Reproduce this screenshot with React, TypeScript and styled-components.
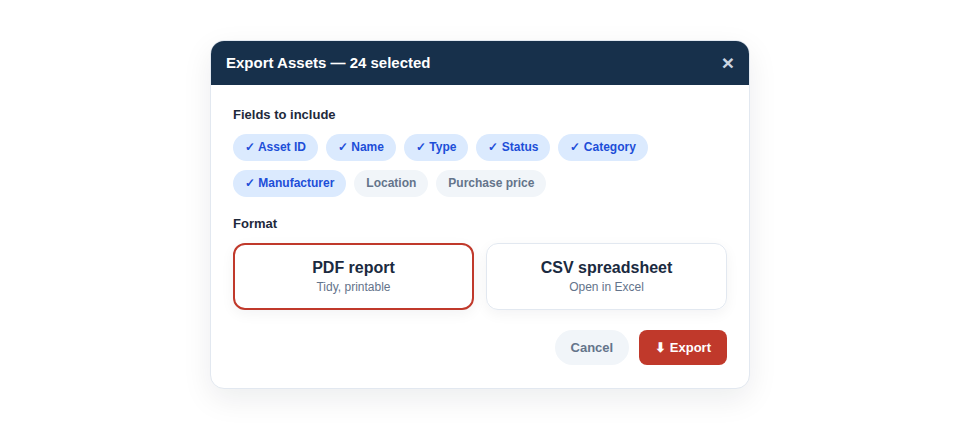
import React, { useState } from "react";
import styled, { createGlobalStyle } from "styled-components";

const GlobalStyle = createGlobalStyle`
    html, body {
        margin: 0;
        padding: 0;
        background: #ffffff;
        font-family: "Liberation Sans", Arial, sans-serif;
    }
    * {
        box-sizing: border-box;
    }
`

const fields = [
    {label: "Asset ID", on: true},
    {label: "Name", on: true},
    {label: "Type", on: true},
    {label: "Status", on: true},
    {label: "Category", on: true},
    {label: "Manufacturer", on: true},
    {label: "Location", on: false},
    {label: "Purchase price", on: false},
]

const formats = [
    {id: "pdf", title: "PDF report", text: "Tidy, printable"},
    {id: "csv", title: "CSV spreadsheet", text: "Open in Excel"},
]

export default function App() {
    const [format, setFormat] = useState("pdf")

    return (
        <Page>
            <GlobalStyle/>
            <Modal>
                <Header>
                    <Title>Export Assets — 24 selected</Title>
                    <CloseBtn aria-label="Close">×</CloseBtn>
                </Header>
                <Body>
                    <Section>
                        <Label>Fields to include</Label>
                        <Chips>
                            {fields.map((f) => (
                                <Chip key={f.label} $on={f.on}>
                                    {f.on ? "✓ " : ""}{f.label}
                                </Chip>
                            ))}
                        </Chips>
                    </Section>
                    <Section>
                        <Label>Format</Label>
                        <Cards>
                            {formats.map((f) => (
                                <Card key={f.id} $active={format === f.id} onClick={() => setFormat(f.id)}>
                                    <CardTitle>{f.title}</CardTitle>
                                    <CardText>{f.text}</CardText>
                                </Card>
                            ))}
                        </Cards>
                    </Section>
                    <Footer>
                        <CancelBtn>Cancel</CancelBtn>
                        <ExportBtn>⬇ Export</ExportBtn>
                    </Footer>
                </Body>
            </Modal>
        </Page>
    )
}

const Page = styled.div`
    width: 960px;
    height: 428px;
    display: flex;
    align-items: center;
    justify-content: center;
`

const Modal = styled.div`
    width: 540px;
    background: #ffffff;
    border: 1px solid #e2e8f0;
    border-radius: 14px;
    box-shadow: 0 10px 30px rgba(15, 23, 42, 0.08);
    overflow: hidden;
`

const Header = styled.div`
    display: flex;
    align-items: center;
    justify-content: space-between;
    height: 44px;
    padding: 0 15px;
    background: #17304b;
`

const Title = styled.h2`
    margin: 0;
    font-size: 15px;
    font-weight: 700;
    color: #ffffff;
`

const CloseBtn = styled.button`
    border: none;
    background: none;
    padding: 0;
    line-height: 1;
    color: #cbd5e1;
    font-family: "Liberation Sans", Arial, sans-serif;
    font-size: 21px;
    font-weight: 700;
    cursor: pointer;
`

const Body = styled.div`
    padding: 22px 22px 23px;
    display: flex;
    flex-direction: column;
    gap: 19px;
`

const Section = styled.div`
    display: flex;
    flex-direction: column;
    gap: 12px;
`

const Label = styled.div`
    font-size: 13px;
    font-weight: 700;
    color: #1e293b;
`

const Chips = styled.div`
    display: flex;
    flex-wrap: wrap;
    gap: 9px 8px;
`

const Chip = styled.span<{ $on: boolean }>`
    display: inline-flex;
    align-items: center;
    height: 27px;
    padding: 0 12px;
    border-radius: 999px;
    font-size: 12px;
    font-weight: 700;
    background: ${p => p.$on ? "#dbeafe" : "#f1f5f9"};
    color: ${p => p.$on ? "#1d4ed8" : "#64748b"};
`

const Cards = styled.div`
    display: grid;
    grid-template-columns: 1fr 1fr;
    gap: 12px;
`

const Card = styled.div<{ $active: boolean }>`
    height: 67px;
    display: flex;
    flex-direction: column;
    align-items: center;
    justify-content: center;
    gap: 3px;
    border-radius: 12px;
    border: ${p => p.$active ? "2px solid #c0392b" : "1px solid #e2e8f0"};
    box-shadow: 0 4px 14px rgba(15, 23, 42, 0.05);
    cursor: pointer;
`

const CardTitle = styled.div`
    font-size: 16px;
    font-weight: 700;
    color: #1a2a40;
`

const CardText = styled.div`
    font-size: 12px;
    color: #64748b;
`

const Footer = styled.div`
    display: flex;
    justify-content: flex-end;
    gap: 10px;
    margin-top: 1px;
`

const CancelBtn = styled.button`
    height: 35px;
    padding: 0 16px;
    border: none;
    border-radius: 999px;
    background: #f1f5f9;
    color: #64748b;
    font-family: inherit;
    font-size: 13px;
    font-weight: 700;
    cursor: pointer;
`

const ExportBtn = styled.button`
    height: 35px;
    padding: 0 16px;
    border: none;
    border-radius: 8px;
    background: #c0392b;
    color: #ffffff;
    font-family: inherit;
    font-size: 13px;
    font-weight: 700;
    cursor: pointer;
`
